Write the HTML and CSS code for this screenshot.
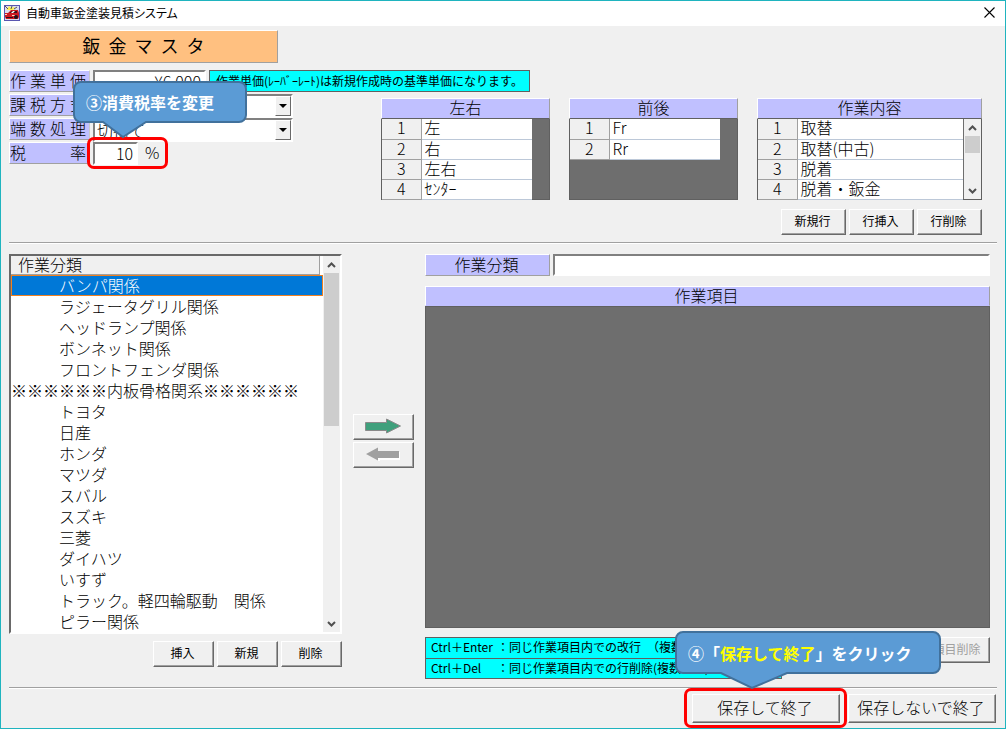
FILE: index.html
```html
<!DOCTYPE html>
<html lang="ja">
<head>
<meta charset="utf-8">
<meta name="viewport" content="width=device-width, initial-scale=1">
<title>自動車鈑金塗装見積システム</title>
<link rel="stylesheet" href="styles.css">
</head>
<body>
<div class="window">
  <header class="titlebar">
    <svg class="app-icon" width="16" height="16" viewBox="0 0 16 16" aria-hidden="true">
      <rect x=".5" y=".5" width="15" height="15" fill="#dcdcf0" stroke="#5a56b0"/>
      <path d="M2 4l2-1 1-2 2 2 4-1-2 3H4z" fill="#fff04a"/>
      <path d="M1 1l3 3M8 1L7 4M13 2l-3 2" stroke="#555" stroke-width="1"/>
      <path d="M1 8h3l3-3h7l1 3v4l-1 2H2l-1-2z" fill="#d01820"/>
      <path d="M5 8l3-2h5v2z" fill="#401018"/>
      <path d="M9 6h2L9 8H7z" fill="#fff"/>
      <path d="M1 9h2v1H1zM8 10h3v1H8z" fill="#ffd8c0"/>
      <path d="M2 12h7v1H2z" fill="#301018"/>
      <circle cx="12" cy="12" r="2" fill="#201018"/>
    </svg>
    <h1 class="app-title">自動車鈑金塗装見積システム</h1>
    <button class="close" type="button" aria-label="閉じる">
      <svg width="11" height="11" viewBox="0 0 11 11" aria-hidden="true"><path d="M.5.5l10 10M10.500.5l-10 10" stroke="#000" stroke-width="1.100"/></svg>
    </button>
  </header>

  <main class="content">
    <h2 class="banner">鈑&nbsp; 金&nbsp; マ&nbsp; ス&nbsp; タ</h2>

    <div class="row row-first">
      <label class="label" for="price">作業単価</label>
      <input class="field price" id="price" type="text" value="¥6,000">
      <p class="tip">作業単価(ﾚｰﾊﾞｰﾚｰﾄ)は新規作成時の基準単価になります。</p>
    </div>

    <div class="upper">
      <div class="settings">
        <div class="row">
          <label class="label" for="method">課税方式</label>
          <span class="combo"><select id="method"><option></option></select><span class="combo-arrow"></span></span>
        </div>
        <div class="row">
          <label class="label" for="rounding">端数処理</label>
          <span class="combo"><select id="rounding"><option>切捨て</option></select><span class="combo-arrow"></span></span>
        </div>
        <div class="row row-rate">
          <label class="label" for="rate">税　率</label>
          <input class="field rate" id="rate" type="text" value="10">
          <span class="unit">%</span>
          <span class="mark mark-rate"></span>
          <div class="callout callout-rate">
            <svg class="callout-shape" width="176" height="60" viewBox="0 0 176 60" aria-hidden="true"><path d="M8 2H166a7 7 0 0 1 7 7V35a7 7 0 0 1-7 7H73L50 57 30 42H8a7 7 0 0 1-7-7V9a7 7 0 0 1 7-7z"/></svg>
            <span class="callout-text">③消費税率を変更</span>
          </div>
        </div>
      </div>

      <div class="grids">
        <div class="grid-row">
          <table class="grid">
            <caption>左右</caption>
            <tbody>
              <tr><th scope="row">1</th><td>左</td></tr>
              <tr><th scope="row">2</th><td>右</td></tr>
              <tr><th scope="row">3</th><td>左右</td></tr>
              <tr><th scope="row">4</th><td>ｾﾝﾀｰ</td></tr>
            </tbody>
          </table>
          <table class="grid">
            <caption>前後</caption>
            <tbody>
              <tr><th scope="row">1</th><td>Fr</td></tr>
              <tr><th scope="row">2</th><td>Rr</td></tr>
            </tbody>
          </table>
          <div class="grid-scroll">
            <table class="grid grid-wide">
              <caption>作業内容</caption>
              <tbody>
                <tr><th scope="row">1</th><td>取替</td></tr>
                <tr><th scope="row">2</th><td>取替(中古)</td></tr>
                <tr><th scope="row">3</th><td>脱着</td></tr>
                <tr><th scope="row">4</th><td>脱着・鈑金</td></tr>
              </tbody>
            </table>
            <div class="scrollbar grid-bar">
              <svg class="chev" width="9" height="6" viewBox="0 0 9 6" aria-hidden="true"><path d="M1 5l3.500-3.500L8 5"/></svg>
              <span class="thumb thumb-small"></span>
              <svg class="chev chev-end" width="9" height="6" viewBox="0 0 9 6" aria-hidden="true"><path d="M1 1l3.500 3.500L8 1"/></svg>
            </div>
          </div>
        </div>
        <div class="buttons">
          <button class="btn btn-row" type="button">新規行</button>
          <button class="btn btn-row" type="button">行挿入</button>
          <button class="btn btn-row" type="button">行削除</button>
        </div>
      </div>
    </div>

    <hr class="rule">

    <div class="lower">
      <section class="category">
        <div class="listbox">
          <div class="list-main">
            <div class="list-head"><span>作業分類</span></div>
            <ul class="list">
              <li class="selected">バンパ関係</li>
              <li>ラジェータグリル関係</li>
              <li>ヘッドランプ関係</li>
              <li>ボンネット関係</li>
              <li>フロントフェンダ関係</li>
              <li class="heading">※※※※※※内板骨格関系※※※※※※</li>
              <li>トヨタ</li>
              <li>日産</li>
              <li>ホンダ</li>
              <li>マツダ</li>
              <li>スバル</li>
              <li>スズキ</li>
              <li>三菱</li>
              <li>ダイハツ</li>
              <li>いすず</li>
              <li>トラック。軽四輪駆動　関係</li>
              <li>ピラー関係</li>
            </ul>
          </div>
          <div class="scrollbar">
            <svg class="chev" width="9" height="6" viewBox="0 0 9 6" aria-hidden="true"><path d="M1 5l3.500-3.500L8 5"/></svg>
            <span class="thumb thumb-large"></span>
            <svg class="chev chev-end" width="9" height="6" viewBox="0 0 9 6" aria-hidden="true"><path d="M1 1l3.500 3.500L8 1"/></svg>
          </div>
        </div>
        <div class="buttons">
          <button class="btn btn-list" type="button">挿入</button>
          <button class="btn btn-list" type="button">新規</button>
          <button class="btn btn-list" type="button">削除</button>
        </div>
      </section>

      <div class="movers">
        <button class="btn btn-list" type="button" aria-label="右へ移動">
          <svg width="36" height="16" viewBox="0 0 36 16" aria-hidden="true"><path d="M.5 4.500H21.500V1L35.500 8 21.500 15V12.500H.5z" fill="#3fa07c" stroke="#8a8a8a"/></svg>
        </button>
        <button class="btn btn-list" type="button" aria-label="左へ移動">
          <svg width="34" height="14" viewBox="0 0 34 14" aria-hidden="true"><path d="M34 5v7H13v2" fill="none" stroke="#fff" stroke-width="2"/><path d="M33 4V11H12V13.500L0 7 12 .5V4z" fill="#a0a0a0"/></svg>
        </button>
      </div>

      <section class="items">
        <div class="name-row">
          <label class="name-label" for="category">作業分類</label>
          <input class="field name" id="category" type="text">
        </div>
        <h3 class="items-head">作業項目</h3>
        <div class="canvas"></div>
        <div class="items-foot">
          <div class="hints">
            <p><span class="key">Ctrl＋Enter</span>：同じ作業項目内での改行　（複数行可）</p>
            <p><span class="key">Ctrl＋Del</span>：同じ作業項目内での行削除(複数行可)</p>
          </div>
          <button class="btn btn-row" type="button" disabled>項目削除</button>
        </div>
      </section>
    </div>

    <hr class="rule">

    <footer class="footer">
      <div class="save">
        <button class="btn btn-large" type="button">保存して終了</button>
        <span class="mark mark-save"></span>
        <div class="callout callout-save">
          <svg class="callout-shape" width="268" height="60" viewBox="0 0 268 60" aria-hidden="true"><path d="M8 1H258a7 7 0 0 1 7 7V35a7 7 0 0 1-7 7H112L77 57 46 42H8a7 7 0 0 1-7-7V8a7 7 0 0 1 7-7z"/></svg>
          <span class="callout-text">④「<em>保存して終了</em>」をクリック</span>
        </div>
      </div>
      <button class="btn btn-large" type="button">保存しないで終了</button>
    </footer>
  </main>
</div>
</body>
</html>
```

FILE: styles.css
```css
* { box-sizing: border-box; }

body {
  margin: 0;
  font-family: "Noto Sans CJK JP", sans-serif;
  font-size: 16px;
  font-weight: 300;
  line-height: 20px;
  color: #000;
}

h1, h2, h3, p, ul { margin: 0; padding: 0; font-size: inherit; font-weight: inherit; }
ul { list-style: none; }
button, input, select { font: inherit; color: inherit; }

.window {
  display: flex;
  flex-direction: column;
  min-height: 100vh;
  border: 1px solid #1fb4bf;
  background: #f0f0f0;
}

/* Title bar */
.titlebar {
  display: flex;
  align-items: center;
  gap: 6px;
  height: 25px;
  padding: 0 10px 2px 3px;
  background: #fff;
}
.app-title { flex: 1; font-size: 12px; font-weight: 400; font-feature-settings: "palt"; }
.close { display: flex; padding: 0; border: 0; background: none; }

.content {
  flex: 1;
  display: flex;
  flex-direction: column;
  padding: 4px 8px 5px;
}

.banner {
  width: 269px;
  height: 33px;
  border: 1px solid;
  border-color: #fff #a0a0a0 #a0a0a0 #fff;
  background: #ffc080;
  font-size: 18px;
  font-weight: 400;
  line-height: 29px;
  text-align: center;
}

/* Settings form */
.row { display: flex; gap: 3px; height: 24px; position: relative; }
.row-first { margin-top: 7px; }
.label {
  width: 81px;
  height: 22px;
  padding: 0 3px 0 0;
  border: 1px solid;
  border-color: #fff #c8c8c8 #a0a0a0 #fff;
  background: #c0c0ff;
  line-height: 18px;
  text-align-last: justify;
}
.field {
  min-width: 0;
  height: 23px;
  padding: 0 3px 2px 2px;
  border: 2px solid;
  border-color: #808080 #fff #fff #808080;
  border-radius: 0;
  background: #fff;
  text-align: right;
}
.price { width: 113px; }
.rate { width: 45px; }
.tip {
  height: 22px;
  padding: 0 6px;
  border: 1px solid #606060;
  background: #0ff;
  font-size: 12px;
  font-weight: 400;
}
.unit { padding-left: 4px; line-height: 20px; }

.combo {
  display: flex;
  width: 200px;
  height: 24px;
  border: 2px solid;
  border-color: #808080 #fff #fff #808080;
  background: #fff;
}
.combo select {
  flex: 1;
  min-width: 0;
  padding: 0 2px;
  border: 0;
  appearance: none;
  background: none;
}
.combo-arrow {
  display: grid;
  place-items: center;
  width: 16px;
  border: 1px solid;
  border-color: #fff #696969 #696969 #fff;
  background: #f0f0f0;
  pointer-events: none;
}
.combo-arrow::after {
  content: "";
  border: 4px solid transparent;
  border-top-color: #000;
  border-bottom: 0;
}

/* Small grids */
.upper { display: flex; justify-content: space-between; }
.grids { padding: 4px 15px 0 0; }
.grid-row { display: flex; gap: 19px; }
.grid {
  display: block;
  width: 169px;
  height: 102px;
  border-collapse: collapse;
  background: #6e6e6e;
  border: 1px solid #606060;
  border-top: 0;
}
.grid caption {
  display: block;
  margin: 0 -1px;
  height: 21px;
  border: 1px solid;
  border-color: #fff #a0a0a0 #606060 #fff;
  background: #c0c0ff;
  line-height: 17px;
}
.grid th, .grid td { height: 20px; padding: 0 0 2px; line-height: 17px; }
.grid th {
  width: 39px;
  border-right: 1px solid #a0a0a0;
  border-bottom: 1px solid #a0a0a0;
  background: #f0f0f0;
  font-weight: 300;
}
.grid td {
  width: 111px;
  padding-left: 3px;
  border-bottom: 1px solid #bcc8d8;
  background: #fff;
}
.grid-scroll { position: relative; width: 225px; }
.grid-wide { width: 100%; }
.grid-wide td { width: 166px; }
.grid-bar { position: absolute; top: 21px; right: 1px; bottom: 1px; }

.scrollbar {
  display: flex;
  flex-direction: column;
  align-items: center;
  width: 17px;
  padding: 6px 1px 5px;
  background: #f0f0f0;
}
.chev { flex: none; fill: none; stroke: #505050; stroke-width: 2; }
.chev-end { margin-top: auto; }
.thumb { width: 15px; margin-top: 5px; background: #cdcdcd; }
.thumb-small { height: 17px; }
.thumb-large { height: 153px; }

/* Buttons */
.buttons { display: flex; justify-content: flex-end; gap: 3px; }
.grids .buttons { margin-top: 9px; }
.btn {
  display: flex;
  align-items: center;
  justify-content: center;
  height: 26px;
  padding: 0 2px 2px 0;
  border: 1px solid;
  border-color: #fff #696969 #696969 #fff;
  border-radius: 0;
  background: #f0f0f0;
  box-shadow: inset -1px -1px #a0a0a0;
  font-size: 12px;
  font-weight: 400;
}
.btn:disabled { color: #a0a0a0; }
.btn-row { width: 65px; }
.btn-list { width: 61px; }
.btn-large { width: 148px; height: 29px; padding-bottom: 4px; font-size: 16px; font-weight: 300; }

.rule {
  width: 100%;
  height: 2px;
  margin: 7px 0 0;
  border: 0;
  border-top: 1px solid #a0a0a0;
  border-bottom: 1px solid #fff;
}

/* Category list and items */
.lower { flex: 1; display: flex; gap: 11px; padding: 10px 7px 1px 0; }
.category { display: flex; flex-direction: column; gap: 7px; width: 333px; }
.listbox {
  display: flex;
  border: 2px solid;
  border-color: #696969 #fff #fff #696969;
  background: #fff;
}
.list-main { flex: 1; }
.list-head {
  width: 309px;
  height: 19px;
  padding-left: 7px;
  border-right: 1px solid #a0a0a0;
  border-bottom: 1px solid #a0a0a0;
  background: #f0f0f0;
  line-height: 17px;
}
.list li { height: 21px; padding-left: 48px; line-height: 21px; white-space: nowrap; }
.list .heading { padding-left: 0; }
.list .selected {
  padding-left: 47px;
  border: 1px solid #f08020;
  background: #0078d7;
  color: #fff;
  line-height: 18px;
}

.movers { display: flex; flex-direction: column; gap: 2px; padding-top: 160px; }

.items { flex: 1; min-width: 0; display: flex; flex-direction: column; }
.name-row { display: flex; gap: 3px; }
.name-label {
  width: 125px;
  height: 22px;
  padding-right: 2px;
  border: 1px solid;
  border-color: #fff #a0a0a0 #a0a0a0 #fff;
  background: #c0c0ff;
  line-height: 18px;
  text-align: center;
}
.name { flex: 1; height: 22px; text-align: left; }
.items-head {
  height: 20px;
  margin-top: 10px;
  padding-right: 2px;
  border: 1px solid;
  border-color: #fff #a0a0a0 #c0c0ff #fff;
  background: #c0c0ff;
  line-height: 16px;
  text-align: center;
}
.canvas { flex: 1; background: #6e6e6e; border: 1px solid #606060; }
.items-foot { display: flex; justify-content: space-between; margin-top: 9px; }
.hints { width: 357px; border: 1px solid #606060; background: #0ff; font-size: 12px; font-weight: 400; }
.hints p { height: 20px; padding-left: 5px; line-height: 18px; }
.hints p + p { border-top: 1px solid #606060; }
.key { display: inline-block; width: 66px; }

.footer { display: flex; justify-content: flex-end; gap: 8px; margin-top: 5px; padding-right: 1px; }
.save { position: relative; }

/* Guide marks laid over the form */
.mark { position: absolute; border: 3px solid #f00; border-radius: 7px; pointer-events: none; }
.mark-rate { left: 78px; top: -5px; width: 81px; height: 32px; }
.mark-save { left: -8px; top: -6px; width: 163px; height: 40px; }
.callout { position: absolute; z-index: 1; color: #fff; font-weight: 700; }
.callout-rate { left: 64px; top: -62px; }
.callout-save { left: -17px; top: -63px; }
.callout-shape { display: block; fill: #5b9bd5; stroke: #41719c; stroke-width: 2; }
.callout-text { position: absolute; left: 13px; top: 12px; white-space: nowrap; }
.callout em { font-style: normal; color: #ff0; }
```
